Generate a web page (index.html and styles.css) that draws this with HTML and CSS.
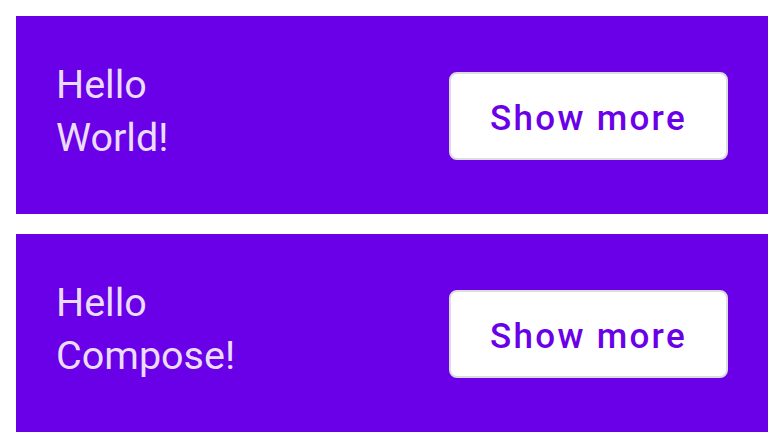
FILE: index.html
```html
<!DOCTYPE html>
<html>
<head>
<meta charset="utf-8">
<link rel="stylesheet" href="styles.css">
</head>
<body>
<div class="list">
  <div class="card">
    <div class="texts">
      <div class="line">Hello</div>
      <div class="line">World!</div>
    </div>
    <button class="more">Show more</button>
  </div>
  <div class="card">
    <div class="texts">
      <div class="line">Hello</div>
      <div class="line">Compose!</div>
    </div>
    <button class="more">Show more</button>
  </div>
</div>
</body>
</html>
```
FILE: styles.css
```css
html, body {
  margin: 0;
  padding: 0;
  background: #ffffff;
}
body {
  font-family: Roboto, "Noto Sans", sans-serif;
}
.list {
  display: flex;
  flex-direction: column;
  gap: 20px;
  padding: 16px 16px 0 16px;
}
.card {
  background: #6a00e8;
  height: 198px;
  box-sizing: border-box;
  padding: 42px 40px 0 40px;
  display: flex;
  align-items: flex-start;
}
.texts {
  flex: 1;
  color: #eadcfc;
  font-size: 39.5px;
  line-height: 53px;
}
.more {
  margin-top: 14px;
  width: 279px;
  height: 88px;
  box-sizing: border-box;
  background: #ffffff;
  border: 2px solid #dcdcdc;
  border-radius: 8px;
  font-family: Roboto, sans-serif;
  font-weight: 500;
  font-size: 35px;
  letter-spacing: 2.3px;
  color: #6a00e8;
  padding: 4px 0 0 0;
  cursor: pointer;
}
```
